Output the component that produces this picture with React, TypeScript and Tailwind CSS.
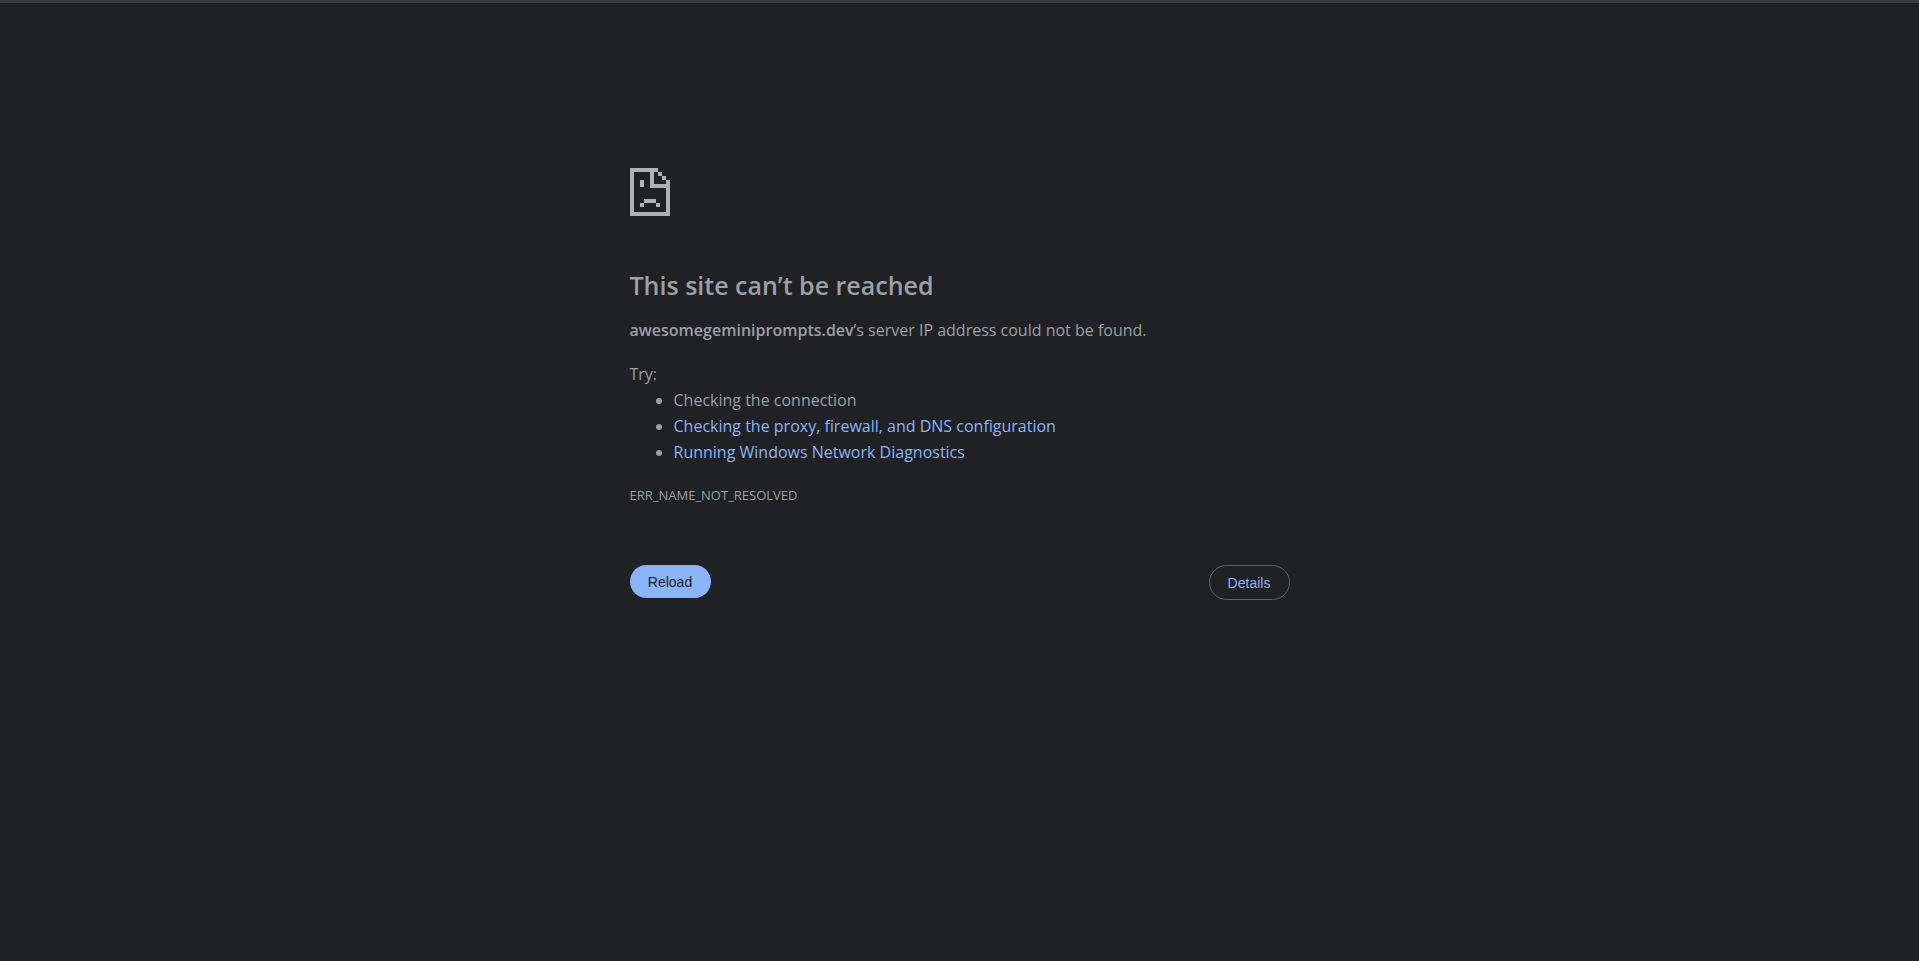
const suggestions = [
  { label: "Checking the connection" },
  { label: "Checking the proxy, firewall, and DNS configuration", href: "#network-settings" },
  { label: "Running Windows Network Diagnostics", href: "#diagnostics" },
];

function SadPageIcon() {
  return (
    <svg
      aria-hidden="true"
      viewBox="0 0 40 48"
      shapeRendering="crispEdges"
      className="h-12 w-10 fill-[#b2b2b2]"
    >
      <path d="M0 0H28V4H24V16H40V48H0ZM4 4V44H36V20H20V4Z" fillRule="evenodd" />
      <path d="M28 4h4v4h-4zM32 8h4v4h-4zM36 12h4v4h-4z" />
      <path d="M10 12h4v7h-4z" />
      <path d="M14 31h12v4h-12zM10 35h4v4h-4zM26 35h4v4h-4z" />
    </svg>
  );
}

export default function App() {
  return (
    <div className="min-h-screen border-t-3 border-[#3c3c3c] bg-[#202124] font-['Open_Sans',sans-serif] text-base text-[#9aa0a6]">
      <main className="mx-auto max-w-[660px] pt-[165px]">
        <SadPageIcon />

        <h1 className="mt-[53px] text-[25px] leading-8 font-semibold">This site can’t be reached</h1>

        <p className="mt-[17px] leading-6">
          <strong className="font-semibold">awesomegeminiprompts.dev</strong>’s server IP address
          could not be found.
        </p>

        <div className="mt-[19px] leading-[26px]">
          <p>Try:</p>
          <ul className="list-disc pl-11">
            {suggestions.map((s) => (
              <li key={s.label}>
                {s.href ? (
                  <a href={s.href} className="text-[#8ab4f8]">
                    {s.label}
                  </a>
                ) : (
                  s.label
                )}
              </li>
            ))}
          </ul>
        </div>

        <p className="mt-5 text-[13px] leading-5">ERR_NAME_NOT_RESOLVED</p>

        <div className="mt-[60px] flex items-start justify-between font-['Liberation_Sans',sans-serif] text-sm">
          <button
            type="button"
            className="h-[33px] min-w-[81px] rounded-full bg-[#8ab4f8] px-4 text-[#202124]"
          >
            Reload
          </button>
          <button
            type="button"
            className="h-[35px] min-w-[81px] rounded-full border border-[#5f6368] px-4 text-[#8ab4f8]"
          >
            Details
          </button>
        </div>
      </main>
    </div>
  );
}
